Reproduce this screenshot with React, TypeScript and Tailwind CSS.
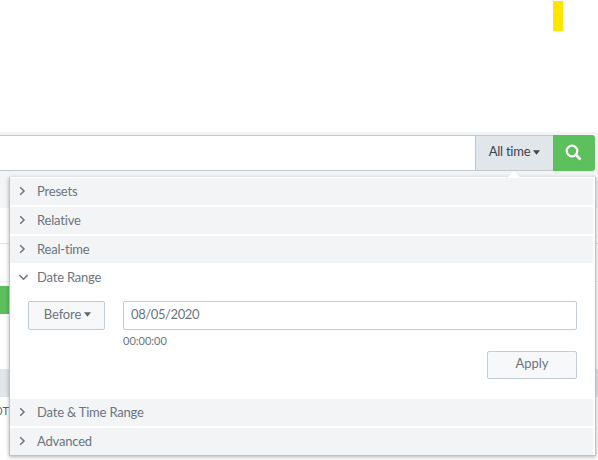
import React from "react";

function Chevron({ open = false }: { open?: boolean }) {
  return (
    <svg width="10" height="10" viewBox="0 0 10 10" fill="none" stroke="#6c7482" strokeWidth="1.5" className="shrink-0">
      {open ? <path d="M1.3 3L5.5 7.2L9.7 3" /> : <path d="M2.2 1.2L6 5L2.2 8.8" />}
    </svg>
  );
}

function Caret({ color }: { color: string }) {
  return (
    <svg width="7" height="5" viewBox="0 0 7 5" fill={color} className="shrink-0">
      <path d="M0 0.3H7L3.5 4.7Z" />
    </svg>
  );
}

function Section({ label, open = false }: { label: string; open?: boolean }) {
  return (
    <div className={`flex h-[27px] shrink-0 items-center gap-[9px] pl-2 ${open ? "bg-white" : "bg-[#f2f4f5] pb-[2px]"}`}>
      <Chevron open={open} />
      <span className="leading-4 tracking-[-0.015em]">{label}</span>
    </div>
  );
}

export default function App() {
  return (
    <div className="relative h-[460px] w-[598px] overflow-hidden bg-white font-['Lato','Liberation_Sans',sans-serif] text-[13px] text-[#6c7482]">
      <div className="flex h-[132px] justify-end pr-[35px] pt-px">
        <div className="h-[30px] w-[10px] bg-[#ffe600]" />
      </div>
      <div className="h-[76px] bg-[#f2f4f5] pt-[3px]">
        <div className="flex h-9 w-[595px]">
          <div className="w-[475px] border-y border-[#c3c7ce] bg-white" />
          <div className="flex w-[78px] items-center justify-center gap-[3px] border-y border-l border-[#c3c7ce] bg-[#e1e6eb] pb-[2px] text-[#3c444d]">
            <span className="tracking-[-0.02em]">All time</span>
            <Caret color="#3c444d" />
          </div>
          <div className="flex w-[42px] items-center justify-center rounded-r-[3px] bg-[#5cc05c] pr-px">
            <svg width="17" height="17" viewBox="0 0 17 17" fill="none" stroke="white" className="-translate-y-px">
              <circle cx="7" cy="7" r="5.3" strokeWidth="2.2" />
              <path d="M10.8 10.8L15.5 15.5" strokeWidth="2.7" />
            </svg>
          </div>
        </div>
      </div>
      <div className="h-9 border-b border-[#e1e4e8]" />
      <div className="h-[38px] border-b border-[#eceef0]" />
      <div className="h-[87px] pt-1">
        <div className="h-7 w-[9px] bg-[#5cc05c]" />
      </div>
      <div className="h-7 bg-[#e1e6eb]" />
      <div className="flex h-7 w-[9px] items-center justify-end overflow-hidden whitespace-nowrap text-[11px] text-[#5c6470]">0T</div>
      <div className="h-[35px]" />

      <div className="absolute left-[9px] top-[177px] flex h-[279px] w-[587px] flex-col gap-[2px] border border-t-0 border-[#bfc3c9] bg-white pt-px shadow-[0_1px_4px_rgba(0,0,0,0.3)]">
        <div className="flex flex-col gap-[2px] pr-[2px]">
          <Section label="Presets" />
          <Section label="Relative" />
          <Section label="Real-time" />
        </div>
        <div className="-mt-[2px] h-[134px] shrink-0">
          <Section label="Date Range" open />
          <div className="flex pl-[18px] pr-[18px] pt-[11px]">
            <div className="flex h-[29px] w-[77px] items-center justify-center gap-[3px] rounded-[2px] border border-[#c3cbd4] bg-[#f7f8fa] pb-[2px] pl-[2px]">
              <span className="tracking-[-0.01em]">Before</span>
              <Caret color="#5c6773" />
            </div>
            <div className="ml-[18px] flex-1">
              <div className="flex h-[29px] items-center rounded-[2px] border border-[#c3cbd4] bg-white pb-px pl-[7px] tracking-[-0.4px]">08/05/2020</div>
              <div className="mt-1 text-[11px] leading-[14px]">00:00:00</div>
            </div>
          </div>
          <div className="mt-[3px] flex justify-end pr-[18px]">
            <div className="flex h-7 w-[90px] items-center justify-center rounded-[2px] border border-[#c3cbd4] bg-[#f7f8fa] pb-[2px]">Apply</div>
          </div>
        </div>
        <div className="flex flex-col gap-[2px] pr-[2px]">
          <Section label="Date & Time Range" />
          <Section label="Advanced" />
        </div>
      </div>
      <svg width="14" height="7" viewBox="0 0 14 7" className="absolute left-[507px] top-[171px]">
        <path d="M0 7L7 0L14 7Z" fill="white" />
      </svg>
    </div>
  );
}
